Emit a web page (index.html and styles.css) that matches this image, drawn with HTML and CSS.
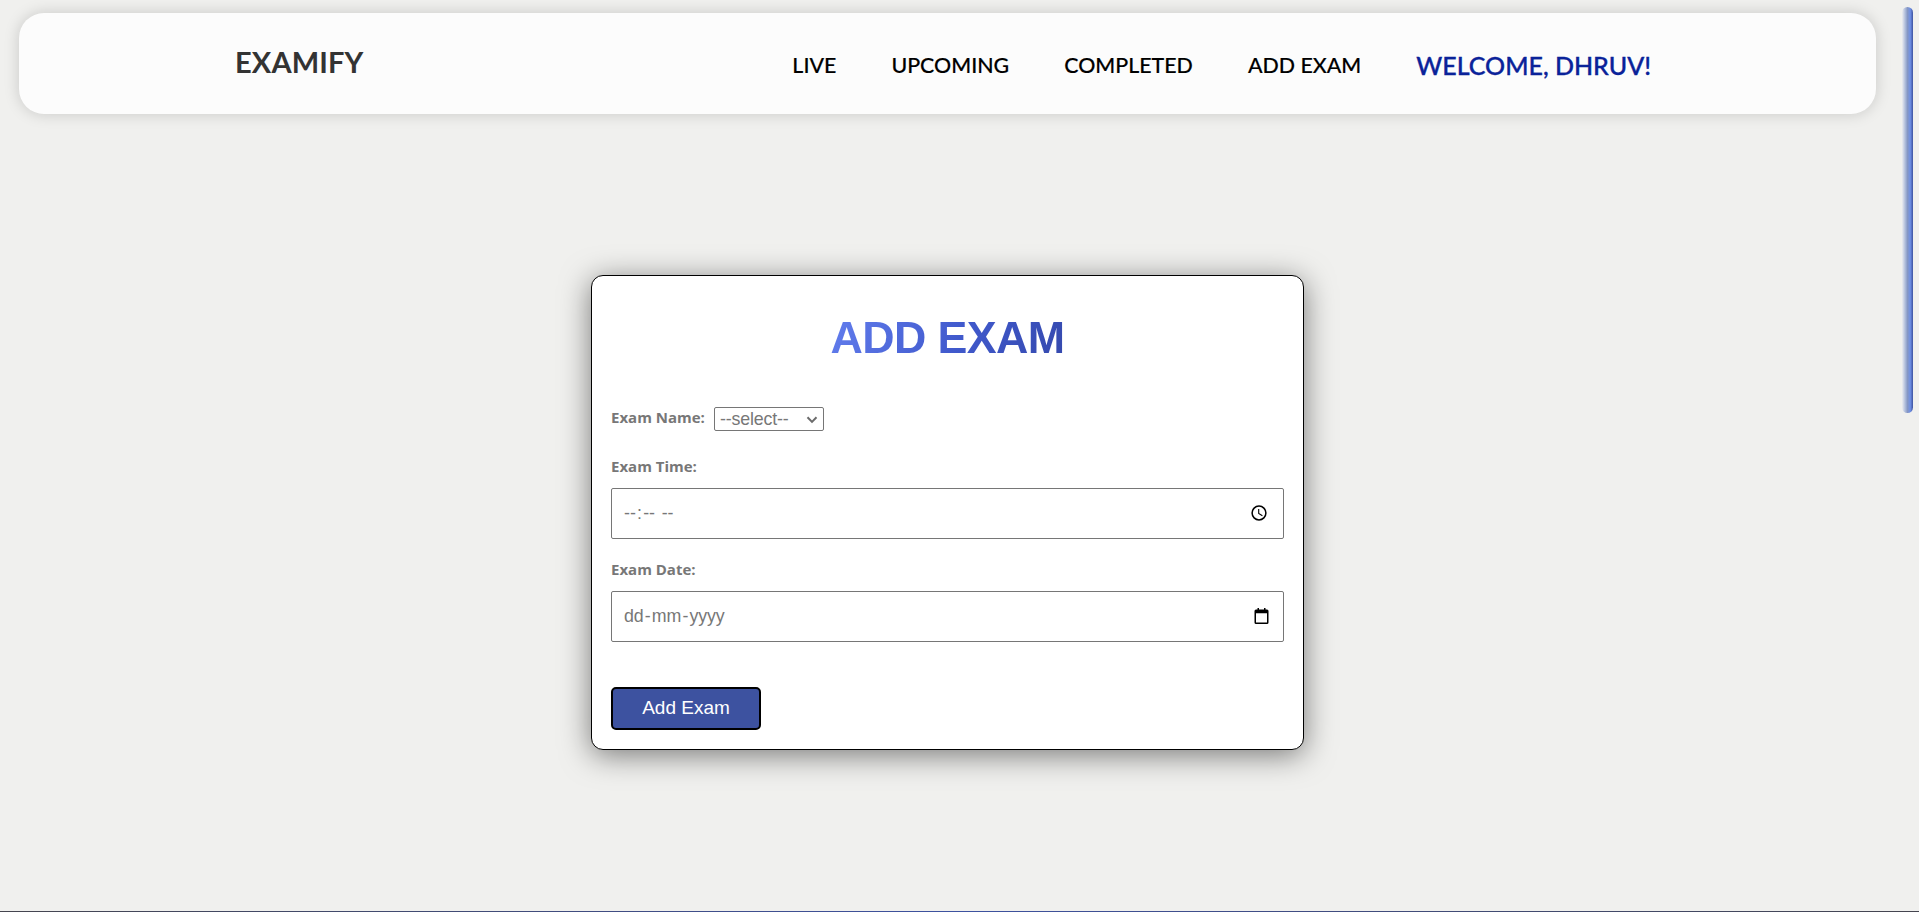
FILE: index.html
```html
<!DOCTYPE html>
<html lang="en">
<head>
<meta charset="utf-8">
<title>Examify</title>
<link rel="stylesheet" href="styles.css">
</head>
<body>
<div class="page">
  <header class="navbar">
    <a class="logo">EXAMIFY</a>
    <nav class="links">
      <a class="link live">LIVE</a>
      <a class="link upcoming">UPCOMING</a>
      <a class="link completed">COMPLETED</a>
      <a class="link add">ADD EXAM</a>
      <a class="welcome">WELCOME, DHRUV!</a>
    </nav>
  </header>
  <main class="content">
    <section class="card">
      <h1 class="title"><span class="title-text">ADD EXAM</span></h1>
      <div class="row">
        <span class="label name-label">Exam Name:</span>
        <div class="select"><span>--select--</span>
          <svg class="chevron" width="12" height="8" viewBox="0 0 12 8"><path d="M1.5 1.2 6 5.9l4.500-4.700" fill="none" stroke="#6b6b6b" stroke-width="2"/></svg>
        </div>
      </div>
      <div class="label time-label">Exam Time:</div>
      <div class="field">
        <div class="segments time"><span>--</span><span>:</span><span>--</span><span class="period">--</span></div>
        <svg class="clock" width="16" height="16" viewBox="0 0 16 16"><circle cx="8" cy="8" r="6.900" fill="none" stroke="#000" stroke-width="1.500"/><path d="M7.700 4v4.500l3.700 2.300" fill="none" stroke="#000" stroke-width="1.100"/></svg>
      </div>
      <div class="label date-label">Exam Date:</div>
      <div class="field">
        <div class="segments date"><span>dd</span><span>-</span><span>mm</span><span>-</span><span>yyyy</span></div>
        <svg class="calendar" width="15" height="16" viewBox="0 0 15 16"><path d="M2 1.500h1.500V0H5v1.500h5V0h1.500v1.500H13A1.500 1.500 0 0 1 14.500 3v11.500A1.500 1.500 0 0 1 13 16H2A1.500 1.500 0 0 1 .500 14.500V3A1.500 1.500 0 0 1 2 1.500zM2 5.300v9.200h11V5.300z" fill="#000" fill-rule="evenodd"/></svg>
      </div>
      <button class="submit">Add Exam</button>
    </section>
  </main>
  <footer class="footer"></footer>
</div>
<div class="scroll-thumb"></div>
</body>
</html>
```
FILE: styles.css
```css
* { box-sizing: border-box; }
body { margin: 0; background: #f0f0ee; overflow: hidden; }
.page { height: 912px; display: flex; flex-direction: column; }
.navbar {
  height: 101px; flex: none; margin: 13px 43px 0 19px; padding: 3px 225px 0 216px;
  display: flex; justify-content: space-between; align-items: center;
  background: #fcfcfc; border-radius: 25px;
  box-shadow: 0 0 15px rgba(0, 0, 0, .17);
}
.logo { font: 700 29px/36px Lato, sans-serif; letter-spacing: .15px; color: #333; margin-top: -7px; }
.links { display: flex; align-items: center; gap: 55px; font-family: Lato, sans-serif; }
.link { font-size: 21.400px; font-weight: 500; line-height: 26px; color: #000; -webkit-text-stroke: .15px #000; }
.welcome { font-size: 25px; font-weight: 500; line-height: 30px; color: #0a2299; -webkit-text-stroke: .35px #0a2299; }
.content { flex: 1; padding: 161px 0 0 591px; }
.card {
  width: 713px; height: 475px; padding: 0 19px;
  background: #fff; border: 1px solid #000; border-radius: 12px;
  box-shadow: 0 5px 30px rgba(0, 0, 0, .5);
}
.title { margin: 0; padding-top: 36px; height: 131px; text-align: center; font: 700 44.800px/50px "Liberation Sans", Arial, sans-serif; letter-spacing: -.6px; }
.title-text { background: linear-gradient(115deg, #637eee 0%, #4059cc 55%, #3549ad 100%); -webkit-background-clip: text; background-clip: text; color: transparent; }
.row { display: flex; align-items: center; height: 24px; gap: 9px; }
.label { font: 700 15px/20px "Open Sans", sans-serif; color: #777; }
.name-label { margin-top: -4px; }
.select {
  width: 110px; height: 24px; border: 1px solid #767676; border-radius: 2px; padding: 0 6px 0 5px;
  display: flex; align-items: center; justify-content: space-between;
  font: 17.800px/22px "Liberation Sans", Arial, sans-serif; letter-spacing: -.15px; color: #777;
}
.chevron { margin: 2px -1px 0 0; }
.time-label { margin-top: 25px; margin-bottom: 12px; }
.date-label { margin-top: 20px; margin-bottom: 12px; }
.field {
  height: 51px; border: 1px solid #767676; border-radius: 2px; padding: 0 16px 2px 12px;
  display: flex; align-items: center; justify-content: space-between;
  font: 17.800px/22px "Liberation Sans", Arial, sans-serif; color: #777;
}
.segments { display: flex; gap: 1.200px; }
.time { padding-top: 1px; }
.date { letter-spacing: -.1px; }
.period { margin-left: 5.500px; }
.calendar { margin-right: -2px; }
.submit {
  display: block; width: 150px; height: 43px; margin-top: 45px; padding: 0 0 2px;
  background: #3d52a0; color: #fff; border: 2px solid #000; border-radius: 5px;
  font: 19px/22px "Liberation Sans", Arial, sans-serif;
}
.footer { height: 1px; background: linear-gradient(90deg, #45454f, #3d52a0 50%, #45454f); box-shadow: 0 0 40px rgba(0, 0, 0, .1); }
.scroll-thumb {
  position: absolute; left: 1902px; top: 7px; width: 11px; height: 406px; border-radius: 6px;
  background: linear-gradient(90deg, #ededf0, #adbbda 30%, #8697c4 50%, #7091e6 75%, #3d52a0);
}
```
